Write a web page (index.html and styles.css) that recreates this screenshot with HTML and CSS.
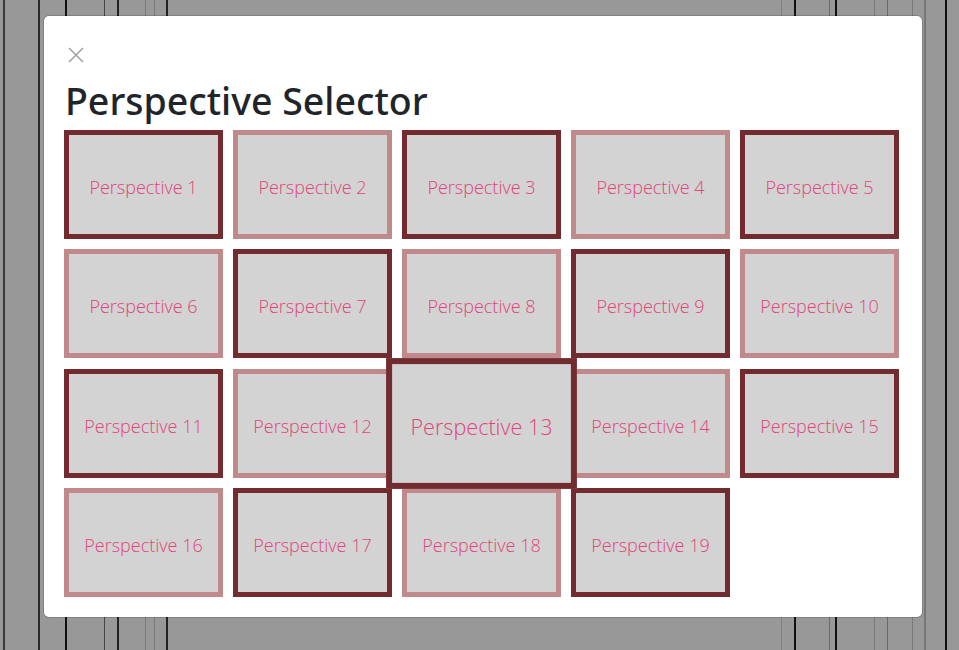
FILE: index.html
```html
<!DOCTYPE html>
<html lang="en">
<head>
<meta charset="utf-8">
<title>Perspective Selector</title>
<link rel="stylesheet" href="styles.css">
</head>
<body>
<div class="backdrop">
  <div class="modal">
    <button class="close" aria-label="Close">
      <svg width="16" height="16" viewBox="0 0 16 16"><path d="M1 1 L15 15 M15 1 L1 15" stroke="#a3a3a3" stroke-width="1.6" fill="none"/></svg>
    </button>
    <h1 class="title">Perspective Selector</h1>
    <div class="grid">
      <div class="tile dark">Perspective 1</div>
      <div class="tile light">Perspective 2</div>
      <div class="tile dark">Perspective 3</div>
      <div class="tile light">Perspective 4</div>
      <div class="tile dark">Perspective 5</div>
      <div class="tile light">Perspective 6</div>
      <div class="tile dark">Perspective 7</div>
      <div class="tile light">Perspective 8</div>
      <div class="tile dark">Perspective 9</div>
      <div class="tile light">Perspective 10</div>
      <div class="tile dark">Perspective 11</div>
      <div class="tile light">Perspective 12</div>
      <div class="tile dark hover">Perspective 13</div>
      <div class="tile light">Perspective 14</div>
      <div class="tile dark">Perspective 15</div>
      <div class="tile light">Perspective 16</div>
      <div class="tile dark">Perspective 17</div>
      <div class="tile light">Perspective 18</div>
      <div class="tile dark">Perspective 19</div>
    </div>
  </div>
</div>
</body>
</html>
```
FILE: styles.css
```css
html, body {
  margin: 0;
  padding: 0;
  height: 100%;
}
body {
  background-color: #989898;
  background-image: linear-gradient(90deg,
    transparent 3px, #3a3a3a 3px, #3a3a3a 5px, transparent 5px,
    transparent 38px, #2a2a2a 38px, #2a2a2a 40px, transparent 40px,
    transparent 65px, #111 65px, #111 67px, transparent 67px,
    transparent 104px, #444 104px, #444 105px, transparent 105px,
    transparent 117px, #222 117px, #222 119px, transparent 119px,
    transparent 145px, #7a7a7a 145px, #7a7a7a 146px, transparent 146px,
    transparent 154px, #7a7a7a 154px, #7a7a7a 155px, transparent 155px,
    transparent 166px, #222 166px, #222 168px, transparent 168px,
    transparent 781px, #808080 781px, #808080 782px, transparent 782px,
    transparent 794px, #111 794px, #111 796px, transparent 796px,
    transparent 829px, #6a6a6a 829px, #6a6a6a 830px, transparent 830px,
    transparent 835px, #111 835px, #111 837px, transparent 837px,
    transparent 874px, #7a7a7a 874px, #7a7a7a 875px, transparent 875px,
    transparent 887px, #6a6a6a 887px, #6a6a6a 888px, transparent 888px,
    transparent 912px, #7a7a7a 912px, #7a7a7a 913px, transparent 913px,
    transparent 924px, #777 924px, #777 926px, transparent 926px,
    transparent 945px, #111 945px, #111 947px, transparent 947px);
  font-family: "Noto Sans", "Open Sans", sans-serif;
}
.backdrop {
  padding: 16px 37px 0 44px;
}
.modal {
  width: 878px;
  height: 601px;
  box-sizing: border-box;
  background: #fff;
  border-radius: 5px;
  box-shadow: 0 0 0 1px rgba(0,0,0,0.15);
  padding: 31px 22px 20px 20px;
}
.close {
  display: block;
  border: 0;
  background: none;
  padding: 0;
  margin: 0 0 0 4px;
  width: 16px;
  height: 16px;
  cursor: pointer;
}
.close svg { display: block; }
.title {
  margin: 14px 0 0 1px;
  font-family: "Noto Sans", sans-serif;
  font-weight: 500;
  font-size: 37.5px;
  line-height: 48px;
  color: #212529;
  letter-spacing: 0;
}
.grid {
  margin-top: 5px;
  display: grid;
  grid-template-columns: repeat(5, 159px);
  grid-auto-rows: 109px;
  column-gap: 10px;
  row-gap: 10.4px;
}
.tile {
  box-sizing: border-box;
  border: 5px solid;
  background: #d3d3d3;
  display: flex;
  align-items: center;
  justify-content: center;
  padding-top: 5px;
  font-family: "Open Sans", sans-serif;
  font-weight: 300;
  font-size: 18px;
  color: #e0457b;
}
.dark { border-color: #722b2f; }
.light { border-color: #c0898b; }
.hover {
  transform: scale(1.2);
  position: relative;
  z-index: 1;
}
```
